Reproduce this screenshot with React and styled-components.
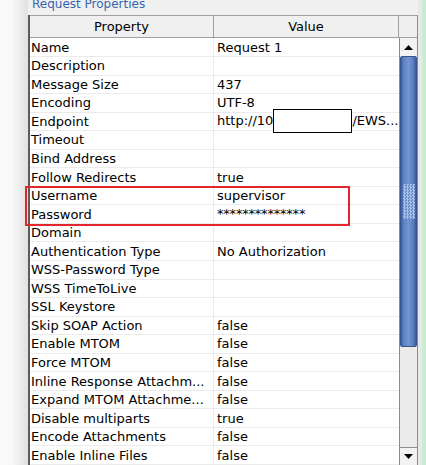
import React from "react";
import styled, { createGlobalStyle } from "styled-components";

const GlobalStyle = createGlobalStyle`
	html, body {
		margin: 0;
		padding: 0;
		background: #f0f0f0;
	}
	* {
		box-sizing: border-box;
	}
`;

const ROW_H = 18.55;

const Frame = styled.div`
	width: 426px;
	height: 465px;
	overflow: hidden;
	display: flex;
	font-family: "DejaVu Sans", Verdana, sans-serif;
	font-size: 13px;
	color: #000;
	background: #f0f0f0;
`;

const LeftShade = styled.div`
	width: 28px;
	flex: none;
	background: linear-gradient(to right, #fbfbfb 0%, #f8f8f8 45%, #e6e6e6 85%, #e2e2e2 100%);
`;

const Panel = styled.div`
	width: 390px;
	flex: none;
	display: flex;
	flex-direction: column;
`;

const Title = styled.div`
	height: 16px;
	padding-left: 4px;
	font-size: 12px;
	line-height: 13px;
	color: #3666ad;
	overflow: hidden;
	span {
		display: block;
		margin-top: -2px;
	}
`;

const Body = styled.div`
	position: relative;
	display: flex;
	flex: 1;
`;

const Table = styled.div`
	width: 371px;
	border-left: 2px solid #5c5c5c;
	background: #fff;
`;

const HeaderRow = styled.div`
	display: grid;
	grid-template-columns: 183px 186px;
	height: 23px;
	border-top: 1px solid #a0a0a0;
	border-bottom: 1px solid #a0a0a0;
	background: #f0f0f0;
`;

const HeaderCell = styled.div`
	display: flex;
	align-items: center;
	justify-content: center;
	border-left: ${(p) => (p.$divider ? "1px solid #a0a0a0" : "none")};
	border-right: ${(p) => (p.$end ? "1px solid #a0a0a0" : "none")};
`;

const Row = styled.div`
	display: grid;
	grid-template-columns: 183px 186px;
	height: ${ROW_H}px;
	border-bottom: 1px solid #ebebeb;
	background: #fff;
`;

const Cell = styled.div`
	display: flex;
	align-items: center;
	padding-left: ${(p) => (p.$value ? "3px" : "1px")};
	white-space: nowrap;
	overflow: ${(p) => (p.$value ? "visible" : "hidden")};
	border-left: ${(p) => (p.$value ? "1px solid #ebebeb" : "none")};
	position: relative;
	line-height: 1;
`;

const Stars = styled.span`
	letter-spacing: -0.2px;
	margin-top: -2px;
`;

const Redacted = styled.span`
	display: inline-block;
	width: 79px;
	height: 24px;
	margin: -4px 0 -3px;
	background: #fff;
	border: 1px solid #000;
	vertical-align: middle;
`;

const Scroll = styled.div`
	width: 19px;
	display: flex;
	flex-direction: column;
	border-right: 1px solid #8c8c8c;
`;

const ScrollHead = styled.div`
	height: 23px;
	flex: none;
	border-top: 1px solid #a0a0a0;
	border-bottom: 1px solid #a0a0a0;
	background: #efefef;
`;

const ArrowButton = styled.div`
	height: 18px;
	flex: none;
	display: flex;
	align-items: center;
	justify-content: center;
	background: #f2f2f2;
	border-left: 1px solid #8c8c8c;
	border-top: ${(p) => (p.$down ? "1px solid #8c8c8c" : "none")};
`;

const Track = styled.div`
	flex: 1;
	display: flex;
	flex-direction: column;
	background: #ebebeb;
	border-left: 1px solid #8c8c8c;
`;

const Thumb = styled.div`
	height: 291px;
	display: flex;
	align-items: center;
	justify-content: center;
	background: linear-gradient(to right, #3d5f9e 0%, #5f82c2 18%, #7395d2 50%, #5a7dbd 82%, #3a5a98 100%);
	border: 1px solid #35558f;
	border-radius: 2px;
`;

const Grip = styled.div`
	width: 12px;
	height: 35px;
	margin-left: 1px;
	background: repeating-conic-gradient(#a9c0e9 0% 25%, #6a8bc8 0% 50%) 0 0 / 3px 3px;
`;

const RightEdge = styled.div`
	width: 8px;
	flex: none;
	display: flex;
	div:first-child {
		width: 4px;
		background: #e8e8e8;
	}
	div:last-child {
		flex: 1;
		background: #c8edd2;
	}
`;

const Highlight = styled.div`
	position: absolute;
	left: -3px;
	top: 171px;
	width: 325px;
	height: 40px;
	border: 2px solid #e3262b;
	pointer-events: none;
`;

const Arrow = ({ down }) => (
	<svg width="9" height="5" viewBox="0 0 9 5">
		<path d={down ? "M0 0H9L4.5 5Z" : "M0 5H9L4.5 0Z"} fill="#000" />
	</svg>
);

const rows = [
	["Name", "Request 1"],
	["Description", ""],
	["Message Size", "437"],
	["Encoding", "UTF-8"],
	["Endpoint", "endpoint"],
	["Timeout", ""],
	["Bind Address", ""],
	["Follow Redirects", "true"],
	["Username", "supervisor"],
	["Password", "password"],
	["Domain", ""],
	["Authentication Type", "No Authorization"],
	["WSS-Password Type", ""],
	["WSS TimeToLive", ""],
	["SSL Keystore", ""],
	["Skip SOAP Action", "false"],
	["Enable MTOM", "false"],
	["Force MTOM", "false"],
	["Inline Response Attachm...", "false"],
	["Expand MTOM Attachme...", "false"],
	["Disable multiparts", "true"],
	["Encode Attachments", "false"],
	["Enable Inline Files", "false"],
];

const renderValue = (value) => {
	if (value === "endpoint") {
		return (
			<span>
				http://10<Redacted />/EWS...
			</span>
		);
	}
	if (value === "password") {
		return <Stars>**************</Stars>;
	}
	return value;
};

const App = () => {
	return (
		<>
			<GlobalStyle />
			<Frame>
				<LeftShade />
				<Panel>
					<Title>
						<span>Request Properties</span>
					</Title>
					<Body>
						<Table>
							<HeaderRow>
								<HeaderCell>Property</HeaderCell>
								<HeaderCell $divider $end>
									Value
								</HeaderCell>
							</HeaderRow>
							{rows.map(([name, value]) => (
								<Row key={name}>
									<Cell>{name}</Cell>
									<Cell $value>{renderValue(value)}</Cell>
								</Row>
							))}
						</Table>
						<Scroll>
							<ScrollHead />
							<ArrowButton>
								<Arrow />
							</ArrowButton>
							<Track>
								<Thumb>
									<Grip />
								</Thumb>
							</Track>
							<ArrowButton $down>
								<Arrow down />
							</ArrowButton>
						</Scroll>
						<Highlight />
					</Body>
				</Panel>
				<RightEdge>
					<div />
					<div />
				</RightEdge>
			</Frame>
		</>
	);
};

export default App;
